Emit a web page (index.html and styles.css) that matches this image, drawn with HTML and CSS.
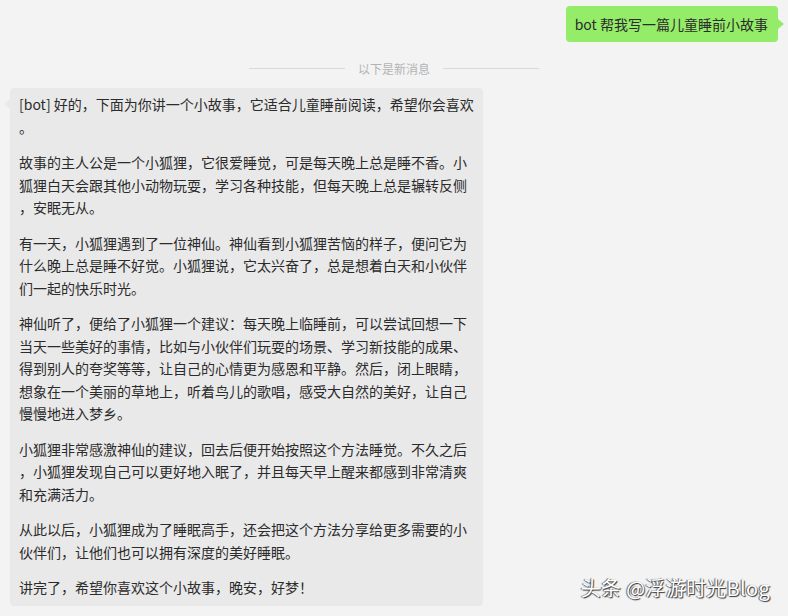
FILE: index.html
```html
<!DOCTYPE html>
<html lang="zh-CN">
<head>
  <meta charset="UTF-8">
  <meta name="viewport" content="width=device-width, initial-scale=1.0">
  <title>聊天记录</title>
  <link rel="stylesheet" href="styles.css">
</head>
<body>

  <div class="chat">
    <div class="row row-self">
      <div class="bubble bubble-self">bot 帮我写一篇儿童睡前小故事</div>
    </div>

    <div class="divider">
      <span class="divider-line"></span>
      <span class="divider-text">以下是新消息</span>
      <span class="divider-line"></span>
    </div>

    <div class="row row-other">
      <div class="bubble bubble-other">
        <p>[bot] 好的，下面为你讲一个小故事，它适合儿童睡前阅读，希望你会喜欢<br>。</p>
        <p>故事的主人公是一个小狐狸，它很爱睡觉，可是每天晚上总是睡不香。小<br>狐狸白天会跟其他小动物玩耍，学习各种技能，但每天晚上总是辗转反侧<br>，安眠无从。</p>
        <p>有一天，小狐狸遇到了一位神仙。神仙看到小狐狸苦恼的样子，便问它为<br>什么晚上总是睡不好觉。小狐狸说，它太兴奋了，总是想着白天和小伙伴<br>们一起的快乐时光。</p>
        <p>神仙听了，便给了小狐狸一个建议：每天晚上临睡前，可以尝试回想一下<br>当天一些美好的事情，比如与小伙伴们玩耍的场景、学习新技能的成果、<br>得到别人的夸奖等等，让自己的心情更为感恩和平静。然后，闭上眼睛，<br>想象在一个美丽的草地上，听着鸟儿的歌唱，感受大自然的美好，让自己<br>慢慢地进入梦乡。</p>
        <p>小狐狸非常感激神仙的建议，回去后便开始按照这个方法睡觉。不久之后<br>，小狐狸发现自己可以更好地入眠了，并且每天早上醒来都感到非常清爽<br>和充满活力。</p>
        <p>从此以后，小狐狸成为了睡眠高手，还会把这个方法分享给更多需要的小<br>伙伴们，让他们也可以拥有深度的美好睡眠。</p>
        <p>讲完了，希望你喜欢这个小故事，晚安，好梦！</p>
      </div>
    </div>
  </div>

  <!-- watermark sits over the chat -->
  <div class="watermark">头条 @浮游时光Blog</div>

</body>
</html>
```

FILE: styles.css
```css
html, body {
  height: 100%;
}
body {
  margin: 0;
  background-color: #f3f3f3;
  font-family: "Noto Sans CJK SC", sans-serif;
  color: #2b2b2b;
  overflow: hidden;
  position: relative;
}
.chat {
  padding: 6px 10px 0 10px;
}
.row {
  display: flex;
}
.row-self {
  justify-content: flex-end;
}
.row-other {
  justify-content: flex-start;
  margin-top: 10px;
}
.bubble {
  position: relative;
  border-radius: 4px;
  font-size: 14px;
}
.bubble-self {
  background-color: #95ec69;
  padding: 7px 10px 7px 9px;
  line-height: 22px;
}
.bubble-self::after {
  content: "";
  position: absolute;
  right: -6px;
  top: 13px;
  border-left: 6px solid #95ec69;
  border-top: 5px solid transparent;
  border-bottom: 5px solid transparent;
}
.bubble-other {
  background-color: #e9e9e9;
  width: 449px;
  padding: 5px 15px 7px 9px;
  line-height: 22.5px;
  white-space: nowrap;
}
.bubble-other::before {
  content: "";
  position: absolute;
  left: -6px;
  top: 11px;
  border-right: 6px solid #e9e9e9;
  border-top: 5px solid transparent;
  border-bottom: 5px solid transparent;
}
.bubble-other p {
  margin: 0;
}
.bubble-other p + p {
  margin-top: 13px;
}
.divider {
  display: flex;
  align-items: center;
  justify-content: center;
  gap: 13px;
  height: 20px;
  margin-top: 16px;
}
.divider-line {
  width: 96px;
  height: 1px;
  background-color: #d9d9d9;
}
.divider-text {
  font-size: 12px;
  color: #b3b3b3;
}
.watermark {
  position: absolute;
  right: 18px;
  bottom: 16px;
  font-size: 20px;
  line-height: 24px;
  letter-spacing: 0.3px;
  color: #fff;
  text-shadow: 1px 1px 1px #333, -1px 0 1px #555;
}
```
